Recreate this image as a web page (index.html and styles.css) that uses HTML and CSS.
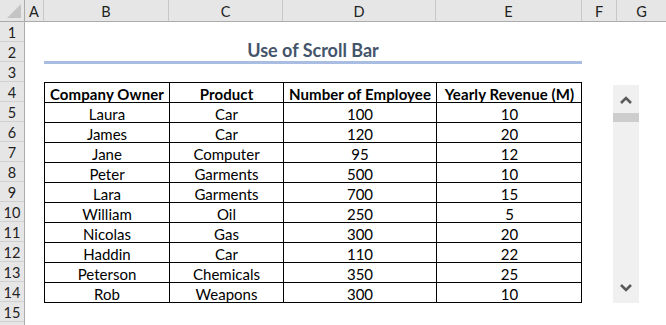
FILE: index.html
```html
<!DOCTYPE html>
<html>
<head>
<meta charset="utf-8">
<link rel="stylesheet" href="styles.css">
</head>
<body>
<div class="sheet">
  <div class="corner"><span class="tri"></span></div>
  <div class="colhdr">A</div>
  <div class="colhdr">B</div>
  <div class="colhdr">C</div>
  <div class="colhdr">D</div>
  <div class="colhdr">E</div>
  <div class="colhdr">F</div>
  <div class="colhdr last">G</div>

  <div class="rowhdrs">
    <div class="rh">1</div><div class="rh">2</div><div class="rh">3</div><div class="rh">4</div>
    <div class="rh">5</div><div class="rh">6</div><div class="rh">7</div><div class="rh">8</div>
    <div class="rh">9</div><div class="rh">10</div><div class="rh">11</div><div class="rh">12</div>
    <div class="rh">13</div><div class="rh">14</div><div class="rh">15</div><div class="rh"></div>
  </div>

  <div class="title">Use of Scroll Bar</div>

  <div class="table">
    <div class="c h">Company Owner</div><div class="c h">Product</div><div class="c h">Number of Employee</div><div class="c h">Yearly Revenue (M)</div>
    <div class="c">Laura</div><div class="c">Car</div><div class="c">100</div><div class="c">10</div>
    <div class="c">James</div><div class="c">Car</div><div class="c">120</div><div class="c">20</div>
    <div class="c">Jane</div><div class="c">Computer</div><div class="c">95</div><div class="c">12</div>
    <div class="c">Peter</div><div class="c">Garments</div><div class="c">500</div><div class="c">10</div>
    <div class="c">Lara</div><div class="c">Garments</div><div class="c">700</div><div class="c">15</div>
    <div class="c">William</div><div class="c">Oil</div><div class="c">250</div><div class="c">5</div>
    <div class="c">Nicolas</div><div class="c">Gas</div><div class="c">300</div><div class="c">20</div>
    <div class="c">Haddin</div><div class="c">Car</div><div class="c">110</div><div class="c">22</div>
    <div class="c">Peterson</div><div class="c">Chemicals</div><div class="c">350</div><div class="c">25</div>
    <div class="c">Rob</div><div class="c">Weapons</div><div class="c">300</div><div class="c">10</div>
  </div>

  <div class="scrollbar">
    <svg class="arrow up" width="12" height="8" viewBox="0 0 12 8"><path d="M1 7 L6 2 L11 7" fill="none" stroke="#5a5a5a" stroke-width="2.6"/></svg>
    <div class="thumb"></div>
    <svg class="arrow down" width="12" height="8" viewBox="0 0 12 8"><path d="M1 1 L6 6 L11 1" fill="none" stroke="#5a5a5a" stroke-width="2.6"/></svg>
  </div>
</div>
</body>
</html>
```
FILE: styles.css
```css
html, body {
  margin: 0;
  padding: 0;
  background: #ffffff;
  overflow: hidden;
}
body {
  font-family: Lato, "Open Sans", "Liberation Sans", sans-serif;
  font-size: 15px;
  color: #000;
}
.sheet {
  position: relative;
  width: 666px;
  height: 325px;
  overflow: hidden;
  display: grid;
  grid-template-columns: 25px 19px 125px 114px 153px 146px 35px 1fr;
  grid-template-rows: 22px repeat(16, 20px);
}
.corner {
  grid-column: 1;
  grid-row: 1;
  background: #e6e6e6;
  border-right: 1px solid #ababab;
  border-bottom: 1px solid #ababab;
  box-sizing: border-box;
  position: relative;
}
.tri {
  position: absolute;
  right: 3px;
  bottom: 3px;
  width: 0;
  height: 0;
  border-left: 14px solid transparent;
  border-bottom: 14px solid #c4c4c4;
}
.colhdr {
  grid-row: 1;
  background: #e6e6e6;
  border-right: 1px solid #c6c6c6;
  border-bottom: 1px solid #ababab;
  box-sizing: border-box;
  display: flex;
  align-items: center;
  justify-content: center;
  padding-top: 1px;
  color: #222;
  font-size: 14.5px;
}
.colhdr.last { border-right: none; }
.rowhdrs {
  grid-column: 1;
  grid-row: 2 / span 16;
  display: flex;
  flex-direction: column;
  background: #e6e6e6;
  border-right: 1px solid #ababab;
  box-sizing: border-box;
}
.rh {
  height: 20px;
  flex: none;
  box-sizing: border-box;
  border-bottom: 1px solid #d0d0d0;
  display: flex;
  align-items: center;
  justify-content: center;
  color: #222;
  font-size: 14.5px;
  padding-top: 1px;
}
.title {
  grid-column: 3 / span 4;
  grid-row: 3;
  box-sizing: border-box;
  border-bottom: 3px solid #a9bde2;
  height: 22px;
  display: flex;
  align-items: flex-end;
  justify-content: center;
  font-weight: 700;
  font-size: 18px;
  color: #44546a;
  line-height: 18px;
  padding-bottom: 2px;
}
.table {
  grid-column: 3 / span 4;
  grid-row: 5 / span 11;
  align-self: start;
  display: grid;
  grid-template-columns: 125px 114px 153px 146px;
  grid-auto-rows: 20px;
  border-right: 1px solid #000;
  border-bottom: 1px solid #000;
}
.c {
  box-sizing: border-box;
  border-left: 1px solid #000;
  border-top: 1px solid #000;
  display: flex;
  align-items: center;
  justify-content: center;
  padding-top: 2px;
  white-space: nowrap;
  line-height: 16px;
}
.c.h {
  font-weight: 700;
  letter-spacing: 0.1px;
}
.scrollbar {
  position: absolute;
  left: 613px;
  top: 85px;
  width: 26px;
  height: 218px;
  background: #f0f0f0;
}
.arrow {
  position: absolute;
  left: 7px;
}
.arrow.up { top: 11px; }
.arrow.down { bottom: 11px; }
.thumb {
  position: absolute;
  left: 0;
  top: 28px;
  width: 26px;
  height: 9px;
  background: #cdcdcd;
}
```
